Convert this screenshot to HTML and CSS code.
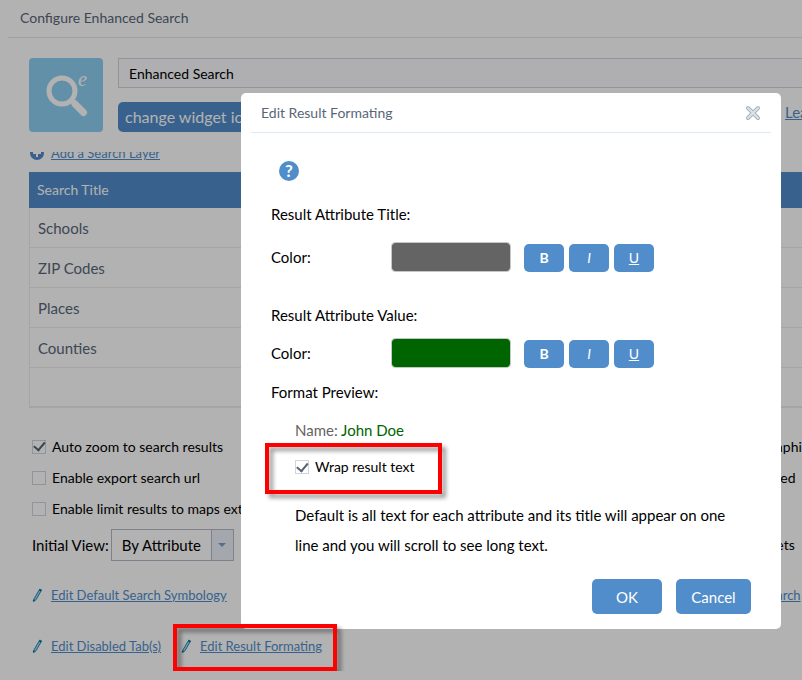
FILE: index.html
```html
<!DOCTYPE html>
<html lang="en">
<head>
  <meta charset="UTF-8">
  <meta name="viewport" content="width=device-width, initial-scale=1.0">
  <title>Configure Enhanced Search</title>
  <link rel="stylesheet" href="styles.css">
</head>
<body>
  <main class="page">
    <h1 class="page-title">Configure Enhanced Search</h1>

    <section class="widget">
      <svg class="widget-icon" viewBox="0 0 74 74" aria-hidden="true">
        <rect width="74" height="74" rx="4" fill="#8fcff2"/>
        <circle cx="33" cy="33" r="13" fill="none" stroke="#fff" stroke-width="5"/>
        <path d="M42 42l5 4" stroke="#fff" stroke-width="5"/>
        <path d="M46 46l8.500 8.500" stroke="#fff" stroke-width="7" stroke-linecap="round"/>
        <text x="49" y="28" class="icon-letter">e</text>
      </svg>
      <div class="widget-fields">
        <input class="widget-name" type="text" value="Enhanced Search" aria-label="Widget name">
        <div class="widget-actions">
          <button type="button" class="btn btn-icon">change widget icon</button>
          <a class="learn" href="#">Learn more</a>
        </div>
      </div>
    </section>

    <section class="settings">
      <div class="add-layer">
        <svg class="add-icon" viewBox="0 0 14 14" aria-hidden="true">
          <circle cx="7" cy="7" r="7" fill="#518dca"/>
          <path d="M7 3v8M3 7h8" stroke="#fff" stroke-width="2"/>
        </svg>
        <a href="#">Add a Search Layer</a>
      </div>

      <table class="layers">
        <thead>
          <tr><th>Search Title</th></tr>
        </thead>
        <tbody>
          <tr><td>Schools</td></tr>
          <tr><td>ZIP Codes</td></tr>
          <tr><td>Places</td></tr>
          <tr><td>Counties</td></tr>
          <tr><td></td></tr>
        </tbody>
      </table>

      <div class="options">
        <div class="option">
          <label class="check"><input type="checkbox" checked> Auto zoom to search results</label>
          <span class="option-end">as graphics</span>
        </div>
        <div class="option">
          <label class="check"><input type="checkbox"> Enable export search url</label>
          <span class="option-end">enabled</span>
        </div>
        <div class="option">
          <label class="check"><input type="checkbox"> Enable limit results to maps extent</label>
        </div>
        <div class="option view">
          <label for="view">Initial View:</label>
          <span class="select">
            <select id="view">
              <option>By Attribute</option>
              <option>By Shape</option>
            </select>
            <span class="arrow"></span>
          </span>
          <span class="option-end">widgets</span>
        </div>
      </div>

      <div class="links">
        <span class="edit-link">
          <svg class="pencil" viewBox="0 0 12 16" aria-hidden="true"><path d="M8.500 1.500l2 1-6 10.500-2.500 2 .3-3z" fill="#a9dcec" stroke="#0b7fab"/><path d="M8 2.500l2 1M1.500 15l.5-2" stroke="#0b6a94" stroke-width="1.500"/></svg>
          <a href="#">Edit Default Search Symbology</a>
        </span>
        <span class="option-end"><a href="#">to Search</a></span>
      </div>
      <div class="links">
        <span class="edit-link">
          <svg class="pencil" viewBox="0 0 12 16" aria-hidden="true"><path d="M8.500 1.500l2 1-6 10.500-2.500 2 .3-3z" fill="#a9dcec" stroke="#0b7fab"/><path d="M8 2.500l2 1M1.500 15l.5-2" stroke="#0b6a94" stroke-width="1.500"/></svg>
          <a href="#">Edit Disabled Tab(s)</a>
        </span>
        <span class="edit-link marked">
          <svg class="pencil" viewBox="0 0 12 16" aria-hidden="true"><path d="M8.500 1.500l2 1-6 10.500-2.500 2 .3-3z" fill="#a9dcec" stroke="#0b7fab"/><path d="M8 2.500l2 1M1.500 15l.5-2" stroke="#0b6a94" stroke-width="1.500"/></svg>
          <a href="#">Edit Result Formating</a>
        </span>
      </div>
    </section>
  </main>

  <div class="overlay">
    <form class="dialog" role="dialog" aria-labelledby="dialogTitle">
      <header class="dialog-header">
        <h2 id="dialogTitle">Edit Result Formating</h2>
        <button type="button" class="close" aria-label="Close">
          <svg viewBox="0 0 16 16" aria-hidden="true">
            <path d="M3 3l10 10M13 3L3 13" stroke="#a9b2bb" stroke-width="4" stroke-linecap="round"/>
            <path d="M3 3l10 10M13 3L3 13" stroke="#dbe3e9" stroke-width="2" stroke-linecap="round"/>
          </svg>
        </button>
      </header>

      <div class="dialog-body">
        <button type="button" class="help" aria-label="Help">?</button>

        <h3>Result Attribute Title:</h3>
        <div class="format-row">
          <label for="titleColor">Color:</label>
          <input type="color" id="titleColor" value="#646464">
          <div class="format-buttons">
            <button type="button" class="btn"><b>B</b></button>
            <button type="button" class="btn"><i>I</i></button>
            <button type="button" class="btn"><u>U</u></button>
          </div>
        </div>

        <h3>Result Attribute Value:</h3>
        <div class="format-row value-row">
          <label for="valueColor">Color:</label>
          <input type="color" id="valueColor" value="#006400">
          <div class="format-buttons">
            <button type="button" class="btn"><b>B</b></button>
            <button type="button" class="btn"><i>I</i></button>
            <button type="button" class="btn"><u>U</u></button>
          </div>
        </div>

        <h3>Format Preview:</h3>
        <div class="preview">
          <p><span class="preview-title">Name:</span> <span class="preview-value">John Doe</span></p>
          <div class="wrap marked">
            <label class="check"><input type="checkbox" checked> Wrap result text</label>
          </div>
          <p>Default is all text for each attribute and its title will appear on one line and you will scroll to see long text.</p>
        </div>
      </div>

      <footer class="dialog-footer">
        <button type="button" class="btn btn-ok">OK</button>
        <button type="button" class="btn btn-cancel">Cancel</button>
      </footer>
    </form>
  </div>
</body>
</html>
```

FILE: styles.css
```css
* {
  box-sizing: border-box;
}
body {
  margin: 0;
  font-family: Lato, "Open Sans", sans-serif;
  font-size: 15px;
  line-height: 20px;
  color: #000;
  background: #fff;
  overflow: hidden;
}
h1, h2, h3, p {
  margin: 0;
  font-weight: normal;
}
button, input, select {
  font: inherit;
}
a {
  color: #518dca;
}
.btn {
  border: none;
  border-radius: 5px;
  background: #518dca;
  color: #fff;
  cursor: pointer;
}
.btn:hover {
  background: #417dba;
}

/* page behind the dialog */
.page {
  padding-left: 8px;
}
.page-title {
  height: 38px;
  padding: 8px 12px;
  font-size: 14px;
  color: #596679;
  border-bottom: 1px solid #e4e4e4;
}
.widget {
  display: flex;
  gap: 15px;
  padding: 20px 0 20px 21px;
}
.widget-icon {
  flex: none;
  width: 74px;
  height: 74px;
}
.icon-letter {
  font: italic 20px "Liberation Serif", serif;
  fill: #fff;
}
.widget-fields {
  flex: 1;
  min-width: 0;
}
.widget-name {
  display: block;
  width: 100%;
  height: 30px;
  padding: 0 10px;
  border: 1px solid #d5d5d8;
  border-right: none;
  background: #fbfbfe;
  font-size: 14px;
}
.widget-actions {
  display: flex;
  justify-content: space-between;
  margin-top: 14px;
}
.btn-icon {
  height: 30px;
  padding: 0 7px;
  font-size: 16px;
}
.learn {
  width: 17px;
  white-space: nowrap;
}
.settings {
  padding-left: 21px;
  overflow: hidden;
}
.add-layer {
  display: flex;
  align-items: center;
  gap: 7px;
  height: 20px;
  margin-top: -9px;
  padding-left: 1px;
  font-size: 13px;
}
.add-icon {
  width: 14px;
  height: 14px;
}
.layers {
  width: 100%;
  margin-top: 9px;
  border-spacing: 0;
  color: #596679;
}
.layers th {
  height: 36px;
  padding: 0 8px;
  background: #518dca;
  color: #fff;
  font-size: 14px;
  font-weight: normal;
  text-align: left;
}
.layers td {
  height: 40px;
  padding: 0 8px;
  border-left: 1px solid #ececec;
  border-bottom: 1px solid #ececec;
}
.layers tr:last-child td {
  border-bottom-width: 2px;
}
.options {
  padding: 23px 0 3px 3px;
}
.option {
  display: flex;
  align-items: center;
  height: 31px;
  white-space: nowrap;
  font-size: 14px;
}
.option-end {
  flex: none;
  width: 55px;
  margin-left: auto;
  font-size: 14px;
  white-space: nowrap;
}
.links .option-end {
  font-size: 13px;
}
.check {
  display: flex;
  align-items: center;
  gap: 6px;
}
.check input {
  appearance: none;
  display: grid;
  place-items: center;
  width: 14px;
  height: 14px;
  margin: 0;
  border: 1px solid #d0d5dd;
  background: #fff;
}
.check input:checked::after {
  content: "";
  width: 5px;
  height: 9px;
  border: solid #5a6470;
  border-width: 0 2px 2px 0;
  transform: rotate(40deg) translate(-1px, -1px);
}
.view {
  height: 42px;
  gap: 2px;
  font-size: 15px;
}
.select {
  display: grid;
  grid-template-columns: 1fr 22px;
  width: 123px;
  height: 32px;
  border: 1px solid #b5b9c5;
}
.select select {
  grid-area: 1 / 1 / 2 / 3;
  appearance: none;
  padding: 0 10px;
  border: none;
  background: transparent;
  color: #000;
}
.arrow {
  grid-area: 1 / 2;
  display: grid;
  place-items: center;
  border-left: 1px solid #b5b9c5;
  background: #ebf0f8;
  pointer-events: none;
}
.arrow::after {
  content: "";
  border: solid transparent;
  border-width: 4px 4px 0;
  border-top-color: #7f9fc4;
}
.links {
  display: flex;
  align-items: center;
  gap: 20px;
  height: 51px;
  padding-left: 3px;
  font-size: 13px;
}
.edit-link {
  display: flex;
  align-items: center;
  gap: 8px;
}
.pencil {
  width: 11px;
  height: 16px;
}

/* red frames that point out a control */
.marked {
  position: relative;
}
.marked::after {
  content: "";
  position: absolute;
  z-index: 20;
  inset: -12px -15px -15px -8px;
  border: 4px solid #fe0000;
  filter: drop-shadow(4px 4px 2px rgba(0, 0, 0, 0.4));
  pointer-events: none;
}
.wrap.marked::after {
  inset: -14px -27px -17px -30px;
}

/* dialog */
.overlay {
  position: fixed;
  inset: 0;
  display: flex;
  align-items: flex-start;
  justify-content: flex-end;
  padding: 93px 21px;
  background: rgba(0, 0, 0, 0.3);
}
.dialog {
  width: 540px;
  padding: 0 10px 15px;
  border-radius: 5px;
  background: #fff;
}
.dialog-header {
  display: flex;
  align-items: center;
  justify-content: space-between;
  height: 40px;
  padding: 0 10px;
  border-bottom: 1px solid #dfe9f2;
}
.dialog-header h2 {
  font-size: 14px;
  color: #596679;
}
.close {
  width: 16px;
  height: 16px;
  padding: 0;
  border: none;
  background: none;
  cursor: pointer;
}
.close svg {
  display: block;
}
.dialog-body {
  padding: 28px 20px 0;
}
.help {
  display: block;
  width: 20px;
  height: 20px;
  margin: 0 8px 23px;
  padding: 0;
  border: none;
  border-radius: 50%;
  background: #518dca;
  color: #fff;
  font-size: 17px;
  font-weight: bold;
  cursor: pointer;
}
.dialog h3 {
  font-size: 15px;
}
.format-row {
  display: flex;
  align-items: center;
  height: 30px;
  margin: 18px 0 33px;
}
.value-row {
  margin: 13px 0 14px;
}
.format-row label {
  width: 120px;
}
.format-row input {
  appearance: none;
  width: 120px;
  height: 30px;
  padding: 0;
  border: 1px solid #c4c8c4;
  border-radius: 4px;
  background: none;
}
.format-row input::-webkit-color-swatch-wrapper {
  padding: 0;
}
.format-row input::-webkit-color-swatch {
  border: none;
  border-radius: 3px;
}
.format-buttons {
  display: flex;
  align-self: flex-end;
  gap: 5px;
  margin-left: 13px;
}
.format-buttons .btn {
  width: 40px;
  height: 28px;
  font-size: 14px;
}
.preview {
  padding: 18px 0 0 24px;
}
.wrap {
  width: 120px;
  margin: 17px 0 23px;
  font-size: 14px;
  white-space: nowrap;
}
.preview p:last-child {
  line-height: 30px;
}
.preview-title {
  color: #646464;
}
.preview-value {
  color: #006400;
}
.dialog-footer {
  display: flex;
  justify-content: flex-end;
  gap: 14px;
  padding: 19px 20px 0;
}
.dialog-footer .btn {
  height: 35px;
}
.btn-ok {
  width: 70px;
}
.btn-cancel {
  width: 75px;
}
```
